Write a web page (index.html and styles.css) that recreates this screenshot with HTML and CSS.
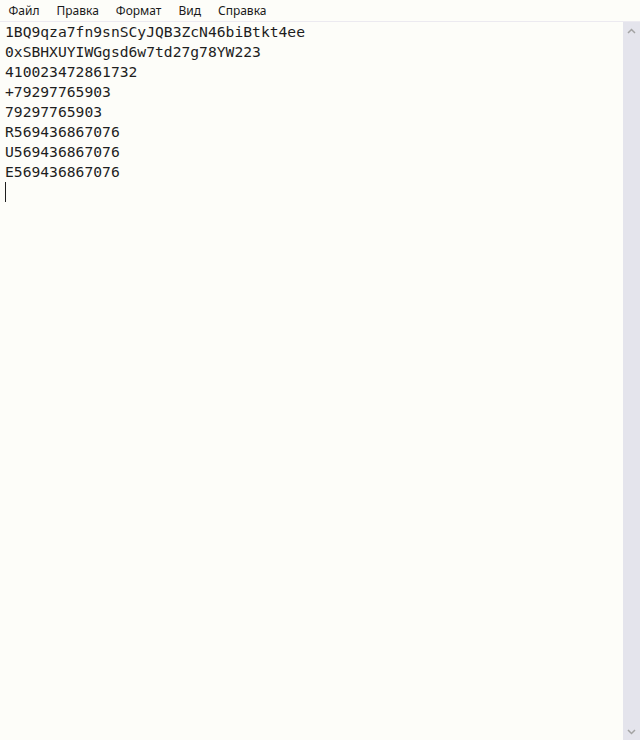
FILE: index.html
```html
<!DOCTYPE html>
<html lang="ru">
<head>
    <meta charset="UTF-8">
    <title>Блокнот</title>
    <link rel="stylesheet" href="styles.css">
</head>
<body>
    <div class="window">
        <nav class="menubar">
            <span class="menu-item">Файл</span>
            <span class="menu-item">Правка</span>
            <span class="menu-item">Формат</span>
            <span class="menu-item">Вид</span>
            <span class="menu-item">Справка</span>
        </nav>

        <div class="editor">
            <div class="text">
                <div class="line">1BQ9qza7fn9snSCyJQB3ZcN46biBtkt4ee</div>
                <div class="line">0xSBHXUYIWGgsd6w7td27g78YW223</div>
                <div class="line">410023472861732</div>
                <div class="line">+79297765903</div>
                <div class="line">79297765903</div>
                <div class="line">R569436867076</div>
                <div class="line">U569436867076</div>
                <div class="line">E569436867076</div>
                <div class="line"><span class="caret"></span></div>
            </div>

            <div class="scrollbar">
                <span class="arrow">
                    <svg width="9" height="6" viewBox="0 0 9 6"><path d="M1 5 L4.5 1.5 L8 5" fill="none" stroke="#a3a3a3" stroke-width="1.5"/></svg>
                </span>
                <span class="track"></span>
                <span class="arrow">
                    <svg width="9" height="6" viewBox="0 0 9 6"><path d="M1 1 L4.5 4.5 L8 1" fill="none" stroke="#a3a3a3" stroke-width="1.5"/></svg>
                </span>
            </div>
        </div>
    </div>
</body>
</html>
```

FILE: styles.css
```css
html, body {
    height: 100%;
}

body {
    margin: 0;
    background-color: #fdfdf9;
    overflow: hidden;
}

.window {
    display: flex;
    flex-direction: column;
    height: 100%;
}

/* строка меню */
.menubar {
    display: flex;
    height: 21px;
    align-items: center;
    border-bottom: 1px solid #eceaf0;
    font-family: "Noto Sans", "Open Sans", sans-serif;
    font-size: 12px;
    color: #1a1a1a;
}

.menu-item {
    padding: 0 8.5px;
}

/* область текста */
.editor {
    flex: 1;
    display: flex;
    min-height: 0;
}

.text {
    flex: 1;
    padding-left: 5px;
    font-family: "DejaVu Sans Mono", "Liberation Mono", monospace;
    font-size: 14.67px;
    line-height: 20px;
    color: #1e1e1e;
}

.line {
    height: 20px;
    white-space: pre;
}

.caret {
    display: inline-block;
    width: 1px;
    height: 20px;
    background-color: #1e1e1e;
    vertical-align: top;
}

/* полоса прокрутки */
.scrollbar {
    width: 17px;
    display: flex;
    flex-direction: column;
    background-color: #e4e4ec;
}

.arrow {
    height: 17px;
    display: flex;
    align-items: center;
    justify-content: center;
}

.track {
    flex: 1;
}
```
